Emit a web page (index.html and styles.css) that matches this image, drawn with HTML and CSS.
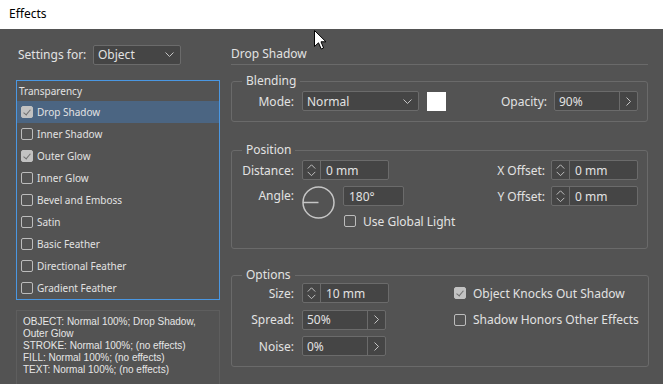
FILE: index.html
```html
<!DOCTYPE html>
<html lang="en">
<head>
  <meta charset="UTF-8">
  <title>Effects</title>
  <link rel="stylesheet" href="styles.css">
</head>
<body>
  <div class="titlebar">Effects</div>

  <div class="dialog">
    <div class="side">
      <div class="settings-for">
        <span class="settings-label">Settings for:</span>
        <div class="select select-object">
          <span>Object</span>
          <svg class="chev-down" width="9" height="5" viewBox="0 0 9 5"><path d="M0.5 0.5 L4.5 4.5 L8.5 0.5"/></svg>
        </div>
      </div>

      <ul class="effect-list">
        <li class="list-head">Transparency</li>
        <li class="selected"><span class="check checked"></span>Drop Shadow</li>
        <li><span class="check"></span>Inner Shadow</li>
        <li><span class="check checked"></span>Outer Glow</li>
        <li><span class="check"></span>Inner Glow</li>
        <li><span class="check"></span>Bevel and Emboss</li>
        <li><span class="check"></span>Satin</li>
        <li><span class="check"></span>Basic Feather</li>
        <li><span class="check"></span>Directional Feather</li>
        <li><span class="check"></span>Gradient Feather</li>
      </ul>

      <div class="summary">
        <div>OBJECT: Normal 100%; Drop Shadow,</div>
        <div>Outer Glow</div>
        <div>STROKE: Normal 100%; (no effects)</div>
        <div>FILL: Normal 100%; (no effects)</div>
        <div>TEXT: Normal 100%; (no effects)</div>
      </div>
    </div>

    <div class="panel">
      <h2 class="panel-title">Drop Shadow</h2>

      <fieldset class="group blending">
        <legend>Blending</legend>
        <div class="row">
          <span class="label">Mode:</span>
          <div class="select select-mode">
            <span>Normal</span>
            <svg class="chev-down" width="9" height="5" viewBox="0 0 9 5"><path d="M0.5 0.5 L4.5 4.5 L8.5 0.5"/></svg>
          </div>
          <span class="swatch"></span>
          <span class="label right-label">Opacity:</span>
          <div class="field stepper-right">
            <span class="value">90%</span>
            <span class="arrow-btn"><svg width="5" height="9" viewBox="0 0 5 9"><path d="M0.5 0.5 L4.5 4.5 L0.5 8.5"/></svg></span>
          </div>
        </div>
      </fieldset>

      <fieldset class="group position">
        <legend>Position</legend>
        <div class="cols">
          <div class="col-left">
            <div class="row">
              <span class="label">Distance:</span>
              <div class="field spinner">
                <span class="spin"><svg width="18" height="18" viewBox="0 0 18 18"><path d="M5 7.5 L9 3.5 L13 7.5 M5 11 L9 15 L13 11"/></svg></span>
                <span class="value">0 mm</span>
              </div>
            </div>
            <div class="row angle-row">
              <span class="label">Angle:</span>
              <svg class="dial" width="35" height="35" viewBox="0 0 35 35"><circle cx="17.5" cy="16.5" r="15.5"/><path d="M2 16.5 H17.5"/></svg>
              <div class="angle-col">
                <div class="field angle-field"><span class="value">180°</span></div>
                <label class="opt"><span class="check"></span>Use Global Light</label>
              </div>
            </div>
          </div>
          <div class="col-right">
            <div class="row">
              <span class="label">X Offset:</span>
              <div class="field spinner">
                <span class="spin"><svg width="18" height="18" viewBox="0 0 18 18"><path d="M5 7.5 L9 3.5 L13 7.5 M5 11 L9 15 L13 11"/></svg></span>
                <span class="value">0 mm</span>
              </div>
            </div>
            <div class="row">
              <span class="label">Y Offset:</span>
              <div class="field spinner">
                <span class="spin"><svg width="18" height="18" viewBox="0 0 18 18"><path d="M5 7.5 L9 3.5 L13 7.5 M5 11 L9 15 L13 11"/></svg></span>
                <span class="value">0 mm</span>
              </div>
            </div>
          </div>
        </div>
      </fieldset>

      <fieldset class="group options">
        <legend>Options</legend>
        <div class="options-grid">
          <span class="label">Size:</span>
          <div class="field spinner">
            <span class="spin"><svg width="18" height="18" viewBox="0 0 18 18"><path d="M5 7.5 L9 3.5 L13 7.5 M5 11 L9 15 L13 11"/></svg></span>
            <span class="value">10 mm</span>
          </div>
          <label class="opt"><span class="check checked"></span>Object Knocks Out Shadow</label>

          <span class="label">Spread:</span>
          <div class="field stepper-right short">
            <span class="value">50%</span>
            <span class="arrow-btn"><svg width="5" height="9" viewBox="0 0 5 9"><path d="M0.5 0.5 L4.5 4.5 L0.5 8.5"/></svg></span>
          </div>
          <label class="opt"><span class="check"></span>Shadow Honors Other Effects</label>

          <span class="label">Noise:</span>
          <div class="field stepper-right short">
            <span class="value">0%</span>
            <span class="arrow-btn"><svg width="5" height="9" viewBox="0 0 5 9"><path d="M0.5 0.5 L4.5 4.5 L0.5 8.5"/></svg></span>
          </div>
          <span></span>
        </div>
      </fieldset>
    </div>
  </div>

  <svg class="cursor" width="13" height="20" viewBox="0 0 13 20"><path d="M0.5 0.5 V16.5 L4.5 12.8 L7.2 19 L9.6 18 L7 11.8 H12 Z"/></svg>
</body>
</html>
```

FILE: styles.css
```css
:root {
  --bg: #535353;
  --text: #e2e2e2;
  --field-bg: #454545;
  --field-border: #6b6b6b;
  --group-border: #6a6a6a;
  --icon: #c4c4c4;
}
* {
  box-sizing: border-box;
}
body {
  margin: 0;
  width: 663px;
  height: 384px;
  overflow: hidden;
  background: var(--bg);
  font-family: "Noto Sans", sans-serif;
  font-size: 12px;
  color: var(--text);
  position: relative;
}
.titlebar {
  height: 29px;
  background: #ffffff;
  color: #000000;
  padding-left: 9px;
  line-height: 28px;
  font-size: 12px;
}
.dialog {
  display: flex;
  padding: 15px 0 0 16px;
  gap: 11px;
}

/* left column */
.side {
  width: 204px;
}
.settings-for {
  display: flex;
  align-items: center;
  height: 21px;
}
.settings-label {
  margin-left: 2px;
  width: 75px;
}
.select {
  display: flex;
  align-items: center;
  justify-content: space-between;
  height: 20px;
  background: var(--field-bg);
  border: 1px solid var(--field-border);
  border-radius: 2px;
  padding: 0 6px 0 4px;
}
.select-object {
  width: 88px;
}
.chev-down path,
.arrow-btn path,
.spin path {
  fill: none;
  stroke: var(--icon);
  stroke-width: 1;
}
.effect-list {
  list-style: none;
  margin: 15px 0 0;
  padding: 0;
  border: 1px solid #4a97e2;
  font-size: 10px;
}
.effect-list li {
  display: flex;
  align-items: center;
  height: 22px;
  padding-left: 4px;
}
.effect-list .list-head {
  height: 20px;
  padding-left: 2px;
}
.effect-list .selected {
  background: #4b6582;
}
.check {
  display: inline-block;
  width: 12px;
  height: 12px;
  border: 1px solid #bcbcbc;
  border-radius: 2px;
  margin-right: 4px;
  flex-shrink: 0;
  position: relative;
}
.check.checked {
  background: #c2c2c2;
  border-color: #c2c2c2;
}
.check.checked::after {
  content: "";
  position: absolute;
  left: 3px;
  top: 1px;
  width: 3px;
  height: 6px;
  border: solid #6f6f6f;
  border-width: 0 1.5px 1.5px 0;
  transform: rotate(40deg);
}
.summary {
  margin-top: 10px;
  height: 90px;
  border: 1px solid #5e5e5e;
  padding: 5px 6px;
  font-family: "Liberation Sans", Arial, sans-serif;
  font-size: 10px;
  line-height: 12px;
  color: #e6e6e6;
}

/* right panel */
.panel {
  width: 417px;
}
.panel-title {
  margin: 0;
  font-size: 12px;
  font-weight: normal;
  line-height: 20px;
  border-bottom: 1px solid var(--group-border);
}
.group {
  margin: 0;
  border: 1px solid var(--group-border);
  border-radius: 3px;
  padding: 3px 9px 10px 0;
}
.group legend {
  margin-left: 10px;
  padding: 0 4px;
  line-height: 14px;
}
.blending {
  margin-top: 9px;
}
.position {
  margin-top: 21px;
  padding-bottom: 21px;
}
.options {
  margin-top: 19px;
  padding-top: 1px;
  padding-bottom: 10px;
}
.row {
  display: flex;
  align-items: center;
  height: 20px;
}
.label {
  width: 62px;
  text-align: right;
  margin-right: 8px;
  flex-shrink: 0;
}
.select-mode {
  width: 117px;
}
.swatch {
  width: 19px;
  height: 19px;
  background: #ffffff;
  margin-left: 8px;
}
.right-label {
  margin-left: auto;
  width: auto;
  margin-right: 7px;
}
.field {
  display: flex;
  align-items: center;
  height: 20px;
  background: var(--field-bg);
  border: 1px solid var(--field-border);
  border-radius: 2px;
}
.field .value {
  flex: 1;
  padding-left: 4px;
}
.stepper-right {
  width: 84px;
}
.arrow-btn {
  width: 18px;
  height: 100%;
  border-left: 1px solid var(--field-border);
  display: flex;
  align-items: center;
  justify-content: center;
}
.spinner {
  width: 87px;
}
.spin {
  width: 18px;
  height: 100%;
  border-right: 1px solid var(--field-border);
  display: flex;
  align-items: center;
  justify-content: center;
}
.spinner .value {
  padding-left: 5px;
}

/* position group */
.cols {
  display: flex;
  justify-content: space-between;
}
.col-left,
.col-right {
  display: flex;
  flex-direction: column;
  gap: 6px;
}
.col-right .label {
  width: auto;
  margin-right: 6px;
}
.col-right .row {
  justify-content: flex-end;
}
.angle-row {
  height: auto;
  align-items: flex-start;
}
.angle-row .label {
  line-height: 20px;
}
.dial {
  margin-left: -1px;
  margin-right: 7px;
}
.dial circle,
.dial path {
  fill: none;
  stroke: #c6c6c6;
  stroke-width: 1.5;
}
.angle-col {
  display: flex;
  flex-direction: column;
}
.angle-field {
  width: 61px;
}
.angle-field .value {
  padding-left: 5px;
}
.opt {
  display: flex;
  align-items: center;
  white-space: nowrap;
}
.opt .check {
  margin-right: 7px;
}
.angle-col .opt {
  margin-top: 9px;
  margin-left: 1px;
  height: 12px;
}

/* options group */
.options-grid {
  display: grid;
  grid-template-columns: 70px 152px 1fr;
  grid-auto-rows: 20px;
  row-gap: 6.5px;
  align-items: center;
}
.options-grid .label {
  margin-right: 0;
  width: 62px;
}
.short {
  width: 84px;
}

.cursor {
  position: absolute;
  left: 314px;
  top: 30px;
}
.cursor path {
  fill: #ffffff;
  stroke: #000000;
  stroke-width: 1;
}
```
